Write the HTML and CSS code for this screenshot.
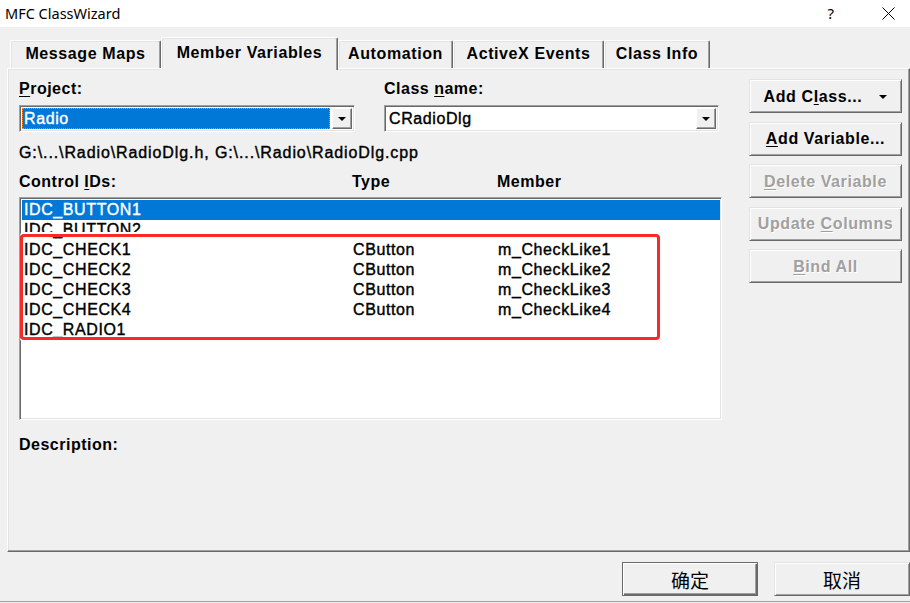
FILE: index.html
```html
<!DOCTYPE html>
<html>
<head>
<meta charset="utf-8">
<link rel="stylesheet" href="styles.css">
</head>
<body>
<div class="window">
  <div class="titlebar">
    <span class="title">MFC ClassWizard</span>
    <span class="tb-btns">
      <span class="help">?</span>
      <svg class="close" width="13" height="13" viewBox="0 0 13 13"><path d="M0.5 0.5 L12.5 12.5 M12.5 0.5 L0.5 12.5" stroke="#000" stroke-width="1" fill="none"/></svg>
    </span>
  </div>
  <div class="tabs">
    <div class="tab w1">Message Maps</div>
    <div class="tab active w2">Member Variables</div>
    <div class="tab w3">Automation</div>
    <div class="tab w4">ActiveX Events</div>
    <div class="tab w5">Class Info</div>
  </div>
  <div class="panel">
    <div class="main">
      <div class="fields">
        <div class="field">
          <div class="label"><u>P</u>roject:</div>
          <div class="combo">
            <div class="value selected"><span>Radio</span></div>
            <div class="dd"><span class="tri"></span></div>
          </div>
        </div>
        <div class="field">
          <div class="label">Class <u>n</u>ame:</div>
          <div class="combo">
            <div class="value"><span>CRadioDlg</span></div>
            <div class="dd"><span class="tri"></span></div>
          </div>
        </div>
      </div>
      <div class="path">G:\...\Radio\RadioDlg.h, G:\...\Radio\RadioDlg.cpp</div>
      <div class="cols label">
        <span>Control <u>I</u>Ds:</span><span>Type</span><span>Member</span>
      </div>
      <div class="list">
        <div class="row sel"><span>IDC_BUTTON1</span><span></span><span></span></div>
        <div class="row"><span>IDC_BUTTON2</span><span></span><span></span></div>
        <div class="row"><span>IDC_CHECK1</span><span>CButton</span><span>m_CheckLike1</span></div>
        <div class="row"><span>IDC_CHECK2</span><span>CButton</span><span>m_CheckLike2</span></div>
        <div class="row"><span>IDC_CHECK3</span><span>CButton</span><span>m_CheckLike3</span></div>
        <div class="row"><span>IDC_CHECK4</span><span>CButton</span><span>m_CheckLike4</span></div>
        <div class="row"><span>IDC_RADIO1</span><span></span><span></span></div>
        <div class="annot"></div>
      </div>
      <div class="desc label">Description:</div>
    </div>
    <div class="side">
      <div class="btn"><span>Add C<u>l</u>ass...</span><span class="tri btn-tri"></span></div>
      <div class="btn"><span><u>A</u>dd Variable...</span></div>
      <div class="btn disabled"><span><u>D</u>elete Variable</span></div>
      <div class="btn disabled"><span>Update <u>C</u>olumns</span></div>
      <div class="btn disabled"><span><u>B</u>ind All</span></div>
    </div>
  </div>
  <div class="footer">
    <div class="btn cjk default">确定</div>
    <div class="btn cjk">取消</div>
  </div>
</div>
</body>
</html>
```

FILE: styles.css
```css
* { box-sizing: border-box; }
html, body { margin: 0; padding: 0; }
body {
  width: 910px;
  height: 603px;
  overflow: hidden;
  background: #f0f0f0;
  font-family: "Liberation Sans", Arial, sans-serif;
  font-size: 16px;
  color: #000;
}
u { text-decoration: underline; text-underline-offset: 2px; }

.window { width: 910px; height: 603px; display: flex; flex-direction: column; }

.titlebar {
  height: 27px;
  background: #fff;
  display: flex;
  align-items: center;
  justify-content: space-between;
  padding: 0 15px 2px 5px;
  font-family: "Noto Sans", "Open Sans", sans-serif;
  font-size: 14.5px;
}
.tb-btns { display: flex; align-items: center; gap: 48px; }
.help { font-size: 15px; }
.close { display: block; margin-top: 1px; }

.tabs {
  margin-top: 10px;
  height: 31px;
  padding-left: 10px;
  display: flex;
  align-items: flex-end;
}
.tab {
  height: 28px;
  display: flex;
  align-items: center;
  justify-content: center;
  font-weight: bold;
  letter-spacing: 0.6px;
  border-top: 1px solid #fff;
  border-left: 1px solid #fff;
  border-right: 1px solid #696969;
  box-shadow: inset -1px 0 #a0a0a0, inset 1px 1px #e3e3e3;
  border-radius: 2px 2px 0 0;
  background: #f0f0f0;
  padding-bottom: 1px;
}
.tab.active {
  height: 33px;
  margin-bottom: -2px;
  position: relative;
  z-index: 2;
  padding-bottom: 3px;
}
.w1 { width: 151px; }
.w2 { width: 177px; }
.w3 { width: 115px; }
.w4 { width: 151px; }
.w5 { width: 106px; }

.panel {
  margin-left: 7px;
  width: 903px;
  height: 484px;
  border-top: 1px solid #fff;
  border-left: 1px solid #fff;
  border-right: 1px solid #696969;
  border-bottom: 1px solid #696969;
  box-shadow: inset -1px -1px #a0a0a0, inset 1px 1px #e3e3e3;
  padding: 10px 0 0 11px;
  display: grid;
  grid-template-columns: 703px 153px;
  column-gap: 27px;
  align-items: start;
}

.label { font-weight: bold; letter-spacing: 0.5px; line-height: 20px; }

.fields { display: flex; gap: 29px; }
.field { display: flex; flex-direction: column; gap: 6px; }
.field:first-child { width: 336px; }
.field:last-child { width: 335px; }

.combo {
  height: 27px;
  border: 1px solid;
  border-color: #a0a0a0 #fff #fff #a0a0a0;
  box-shadow: inset 1px 1px #696969, inset -1px -1px #e3e3e3;
  background: #fff;
  padding: 2px;
  display: flex;
  gap: 2px;
}
.value {
  flex: 1;
  display: flex;
  align-items: center;
  padding-left: 2px;
  font-size: 16px;
  letter-spacing: 0.6px;
  -webkit-text-stroke: 0.4px #000;
}
.value.selected {
  background: #0078d7;
  color: #fff;
  -webkit-text-stroke: 0.4px #fff;
  outline: 1px dotted #ff8729;
  outline-offset: -1px;
}
.dd {
  width: 20px;
  background: #f0f0f0;
  border: 1px solid;
  border-color: #fff #696969 #696969 #fff;
  box-shadow: inset -1px -1px #a0a0a0;
  display: flex;
  align-items: center;
  justify-content: center;
}
.tri {
  width: 0; height: 0;
  border-left: 4px solid transparent;
  border-right: 4px solid transparent;
  border-top: 4px solid #000;
}

.path {
  margin-top: 11px;
  line-height: 20px;
  letter-spacing: 0.9px;
  -webkit-text-stroke: 0.4px #000;
}
.cols {
  margin-top: 9px;
  display: grid;
  grid-template-columns: 333px 145px 1fr;
}

.list {
  position: relative;
  margin-top: 5px;
  height: 223px;
  border: 1px solid;
  border-color: #a0a0a0 #fff #fff #a0a0a0;
  box-shadow: inset 1px 1px #696969, inset -1px -1px #e3e3e3;
  background: #fff;
  padding: 2px 1px 0 2px;
}
.row {
  height: 20px;
  display: grid;
  grid-template-columns: 329px 145px 1fr;
  align-items: center;
  padding-left: 2px;
  letter-spacing: 0.6px;
  -webkit-text-stroke: 0.4px #000;
  line-height: 20px;
}
.row.sel { background: #0078d7; color: #fff; -webkit-text-stroke: 0.4px #fff; }
.annot {
  position: absolute;
  left: 0;
  top: 36px;
  width: 640px;
  height: 106px;
  border: 3px solid #f62a2a;
  border-radius: 4px;
  box-shadow: 0 -2px 0 #fff, 0 2px 0 #fff;
}

.desc { margin-top: 15px; }

.side { display: flex; flex-direction: column; gap: 8.6px; }
.btn {
  height: 34px;
  display: flex;
  align-items: center;
  justify-content: center;
  background: #f0f0f0;
  border: 1px solid;
  border-color: #e3e3e3 #696969 #696969 #e3e3e3;
  box-shadow: inset 1px 1px #fff, inset -1px -1px #a0a0a0;
  font-weight: bold;
  letter-spacing: 0.6px;
  padding-top: 1px;
  white-space: pre;
}
.btn-tri { margin-left: 17px; }
.btn.disabled { color: #a0a0a0; text-shadow: 1px 1px 0 #fff; }

.footer {
  height: 50px;
  display: flex;
  justify-content: flex-end;
  align-items: flex-start;
  gap: 16px;
  padding-top: 10px;
  border-bottom: 1px solid #a0a0a0;
}
.footer .btn { width: 136px; }
.btn.cjk {
  font-family: "Noto Sans CJK SC", sans-serif;
  font-weight: normal;
  font-size: 19px;
  letter-spacing: 0;
  padding-top: 0;
}
.btn.default {
  border-color: #696969;
  box-shadow: inset 1px 1px #fff, inset -1px -1px #696969, inset -2px -2px #a0a0a0;
}
```
